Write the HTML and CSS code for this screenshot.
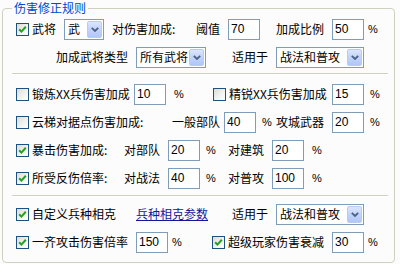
FILE: index.html
```html
<!DOCTYPE html>
<html lang="zh-CN">
<head>
    <meta charset="UTF-8">
    <title>伤害修正规则</title>
    <link rel="stylesheet" href="styles.css">
</head>
<body>

    <fieldset class="group">
        <legend>伤害修正规则</legend>

        <div class="rows">
            <!-- 武将 -->
            <div class="row row-general">
                <label class="check"><span class="box"><svg viewBox="0 0 11 11"><polyline points="2.2,5.2 4.4,7.6 8.8,2.8"/></svg></span>武将</label>
                <div class="combo combo-s"><span>武</span><span class="combo-btn"><svg viewBox="0 0 8 5"><polyline points="0.8,0.8 4,4 7.2,0.8"/></svg></span></div>
                <span>对伤害加成:</span>
                <span>阈值</span>
                <input class="num" type="text" value="70">
                <span>加成比例</span>
                <input class="num" type="text" value="50">
                <span class="pct">%</span>
            </div>
            <div class="row row-type">
                <span>加成武将类型</span>
                <div class="combo combo-m"><span>所有武将</span><span class="combo-btn"><svg viewBox="0 0 8 5"><polyline points="0.8,0.8 4,4 7.2,0.8"/></svg></span></div>
                <span>适用于</span>
                <div class="combo combo-l"><span>战法和普攻</span><span class="combo-btn"><svg viewBox="0 0 8 5"><polyline points="0.8,0.8 4,4 7.2,0.8"/></svg></span></div>
            </div>

            <div class="sep sep-top"></div>

            <div class="row row-train">
                <label class="check"><span class="box"></span>锻炼XX兵伤害加成</label>
                <input class="num" type="text" value="10">
                <span class="pct">%</span>
                <label class="check"><span class="box"></span>精锐XX兵伤害加成</label>
                <input class="num" type="text" value="15">
                <span class="pct">%</span>
            </div>
            <div class="row row-siege">
                <label class="check"><span class="box"></span>云梯对据点伤害加成:</label>
                <span>一般部队</span>
                <input class="num" type="text" value="40">
                <span class="pct">%</span>
                <span>攻城武器</span>
                <input class="num" type="text" value="20">
                <span class="pct">%</span>
            </div>
            <div class="row row-crit">
                <label class="check"><span class="box"><svg viewBox="0 0 11 11"><polyline points="2.2,5.2 4.4,7.6 8.8,2.8"/></svg></span>暴击伤害加成:</label>
                <span>对部队</span>
                <input class="num" type="text" value="20">
                <span class="pct">%</span>
                <span>对建筑</span>
                <input class="num" type="text" value="20">
                <span class="pct">%</span>
            </div>
            <div class="row row-crit">
                <label class="check"><span class="box"><svg viewBox="0 0 11 11"><polyline points="2.2,5.2 4.4,7.6 8.8,2.8"/></svg></span>所受反伤倍率:</label>
                <span>对战法</span>
                <input class="num" type="text" value="40">
                <span class="pct">%</span>
                <span>对普攻</span>
                <input class="num" type="text" value="100">
                <span class="pct">%</span>
            </div>

            <div class="sep sep-bottom"></div>

            <div class="row row-counter">
                <label class="check"><span class="box"><svg viewBox="0 0 11 11"><polyline points="2.2,5.2 4.4,7.6 8.8,2.8"/></svg></span>自定义兵种相克</label>
                <a class="link" href="#">兵种相克参数</a>
                <span>适用于</span>
                <div class="combo combo-l"><span>战法和普攻</span><span class="combo-btn"><svg viewBox="0 0 8 5"><polyline points="0.8,0.8 4,4 7.2,0.8"/></svg></span></div>
            </div>
            <div class="row row-multi">
                <label class="check"><span class="box"><svg viewBox="0 0 11 11"><polyline points="2.2,5.2 4.4,7.6 8.8,2.8"/></svg></span>一齐攻击伤害倍率</label>
                <input class="num" type="text" value="150">
                <span class="pct">%</span>
                <label class="check"><span class="box"><svg viewBox="0 0 11 11"><polyline points="2.2,5.2 4.4,7.6 8.8,2.8"/></svg></span>超级玩家伤害衰减</label>
                <input class="num" type="text" value="30">
                <span class="pct">%</span>
            </div>
        </div>
    </fieldset>

</body>
</html>
```

FILE: styles.css
```css
body {
    margin: 0;
    background: #fcfcfc;
    color: #000;
    font-family: "Noto Sans CJK SC", "Liberation Sans", sans-serif;
    font-size: 12px;
    line-height: 14px;
}

/* --- Group box --- */
.group {
    margin: 0 5px 0 2px;
    padding: 0;
    height: 263px;
    box-sizing: border-box;
    border: 1px solid #d0d0bf;
    border-radius: 4px;
}

.group legend {
    margin-left: 9px;
    padding: 0 2px;
    color: #0046d5;
    line-height: 16px;
}

/* --- Rows (each row has its own column grid) --- */
.row {
    display: grid;
    align-items: center;
    height: 28px;
    padding-left: 13px;
    white-space: nowrap;
}

.row-general { grid-template-columns: 48px 48px 84px 32px 48px 56px 36px auto; margin-top: -1px; }
.row-type    { grid-template-columns: 80px 96px 44px auto; padding-left: 53px; }
.row-train   { grid-template-columns: 118px 40px 39px 119px 38px auto; margin-top: 5px; }
.row-siege   { grid-template-columns: 156px 52px 38px 14px 56px 38px auto; }
.row-crit    { grid-template-columns: 108px 44px 38px 22px 44px 40px auto; }
.row-counter { grid-template-columns: 120px 96px 44px auto; margin-top: 3px; }
.row-multi   { grid-template-columns: 120px 36px 40px 120px 36px auto; }

/* --- Etched separators --- */
.sep {
    height: 0;
    margin: 0 6px 0 9px;
    border-top: 1px solid #d0d0bf;
    border-bottom: 1px solid #fff;
}

.sep-top { margin-top: 2px; }
.sep-bottom { margin-top: 3px; }

/* --- Checkbox --- */
.check {
    display: flex;
    align-items: center;
    gap: 3px;
}

.check .box {
    flex: none;
    width: 13px;
    height: 13px;
    box-sizing: border-box;
    border: 1px solid #1c5180;
    background: linear-gradient(135deg, #dcdcd7 0%, #f4f4f0 60%, #ffffff 100%);
}

.check .box svg {
    display: block;
    width: 11px;
    height: 11px;
}

.check .box polyline {
    fill: none;
    stroke: #21a121;
    stroke-width: 2;
}

/* --- Text boxes --- */
.num {
    width: 32px;
    height: 21px;
    box-sizing: border-box;
    margin: 0;
    padding: 0 0 0 2px;
    border: 1px solid #7f9db9;
    background: #fff;
    color: #000;
    font-family: "Liberation Sans", sans-serif;
    font-size: 12px;
    outline: none;
}

.pct {
    font-family: "Liberation Sans", sans-serif;
    font-size: 11px;
}

/* --- Combo boxes --- */
.combo {
    display: flex;
    align-items: center;
    justify-content: space-between;
    height: 21px;
    box-sizing: border-box;
    padding: 0 1px 0 3px;
    border: 1px solid #7f9db9;
    background: #fff;
}

.combo-s { width: 40px; }
.combo-m { width: 70px; }
.combo-l { width: 88px; }

.combo-btn {
    display: flex;
    align-items: center;
    justify-content: center;
    width: 15px;
    height: 17px;
    box-sizing: border-box;
    border: 1px solid #b9cbf5;
    border-radius: 2px;
    background: linear-gradient(#dce6fd, #c1d3fb 50%, #b2c7f6);
}

.combo-btn svg {
    width: 8px;
    height: 5px;
}

.combo-btn polyline {
    fill: none;
    stroke: #4d6185;
    stroke-width: 1.8;
}

/* --- Link --- */
.link {
    color: #15159c;
    text-decoration: underline;
}
```
